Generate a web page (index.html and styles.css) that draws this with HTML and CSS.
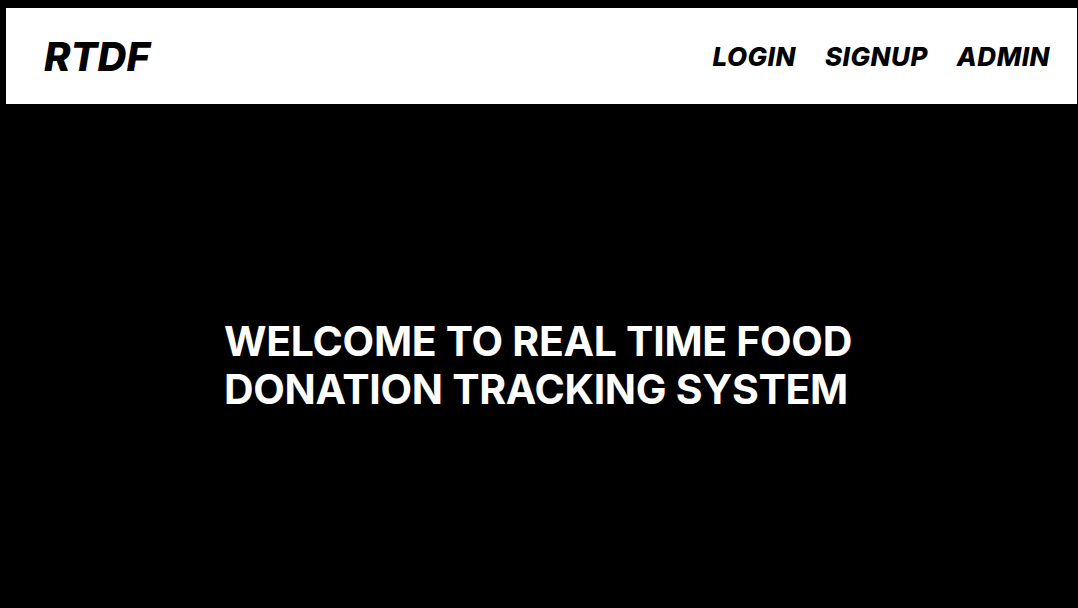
FILE: index.html
```html
<!DOCTYPE html>
<html lang="en">
<head>
<meta charset="utf-8">
<title>RTDF</title>
<link rel="stylesheet" href="styles.css">
</head>
<body>
<header class="topbar">
  <div class="brand">RTDF</div>
  <nav class="nav">
    <a class="nav-link" href="#">LOGIN</a>
    <a class="nav-link" href="#">SIGNUP</a>
    <a class="nav-link" href="#">ADMIN</a>
  </nav>
</header>
<main class="hero">
  <h1 class="hero-title">WELCOME TO REAL TIME FOOD DONATION TRACKING SYSTEM</h1>
</main>
</body>
</html>
```
FILE: styles.css
```css
html, body {
  margin: 0;
  padding: 0;
  background: #000;
  height: 100%;
}
body {
  font-family: Inter, "Noto Sans", sans-serif;
  display: flex;
  flex-direction: column;
}
.topbar {
  margin: 8px 1px 0 6px;
  height: 96px;
  background: #fff;
  display: flex;
  align-items: center;
  justify-content: space-between;
  padding: 0 27px 0 38px;
  box-sizing: border-box;
}
.brand {
  font-size: 40px;
  font-weight: 800;
  font-style: italic;
  color: #000;
}
.nav {
  display: flex;
  gap: 29px;
}
.nav-link {
  font-size: 26px;
  font-weight: 800;
  font-style: italic;
  letter-spacing: 0.5px;
  color: #000;
  text-decoration: none;
}
.hero {
  flex: 1;
  display: flex;
  align-items: center;
  justify-content: center;
}
.hero-title {
  margin: 18px 0 0;
  width: 630px;
  color: #fff;
  font-size: 41px;
  font-weight: 700;
  letter-spacing: -0.3px;
  line-height: 48px;
}
```
